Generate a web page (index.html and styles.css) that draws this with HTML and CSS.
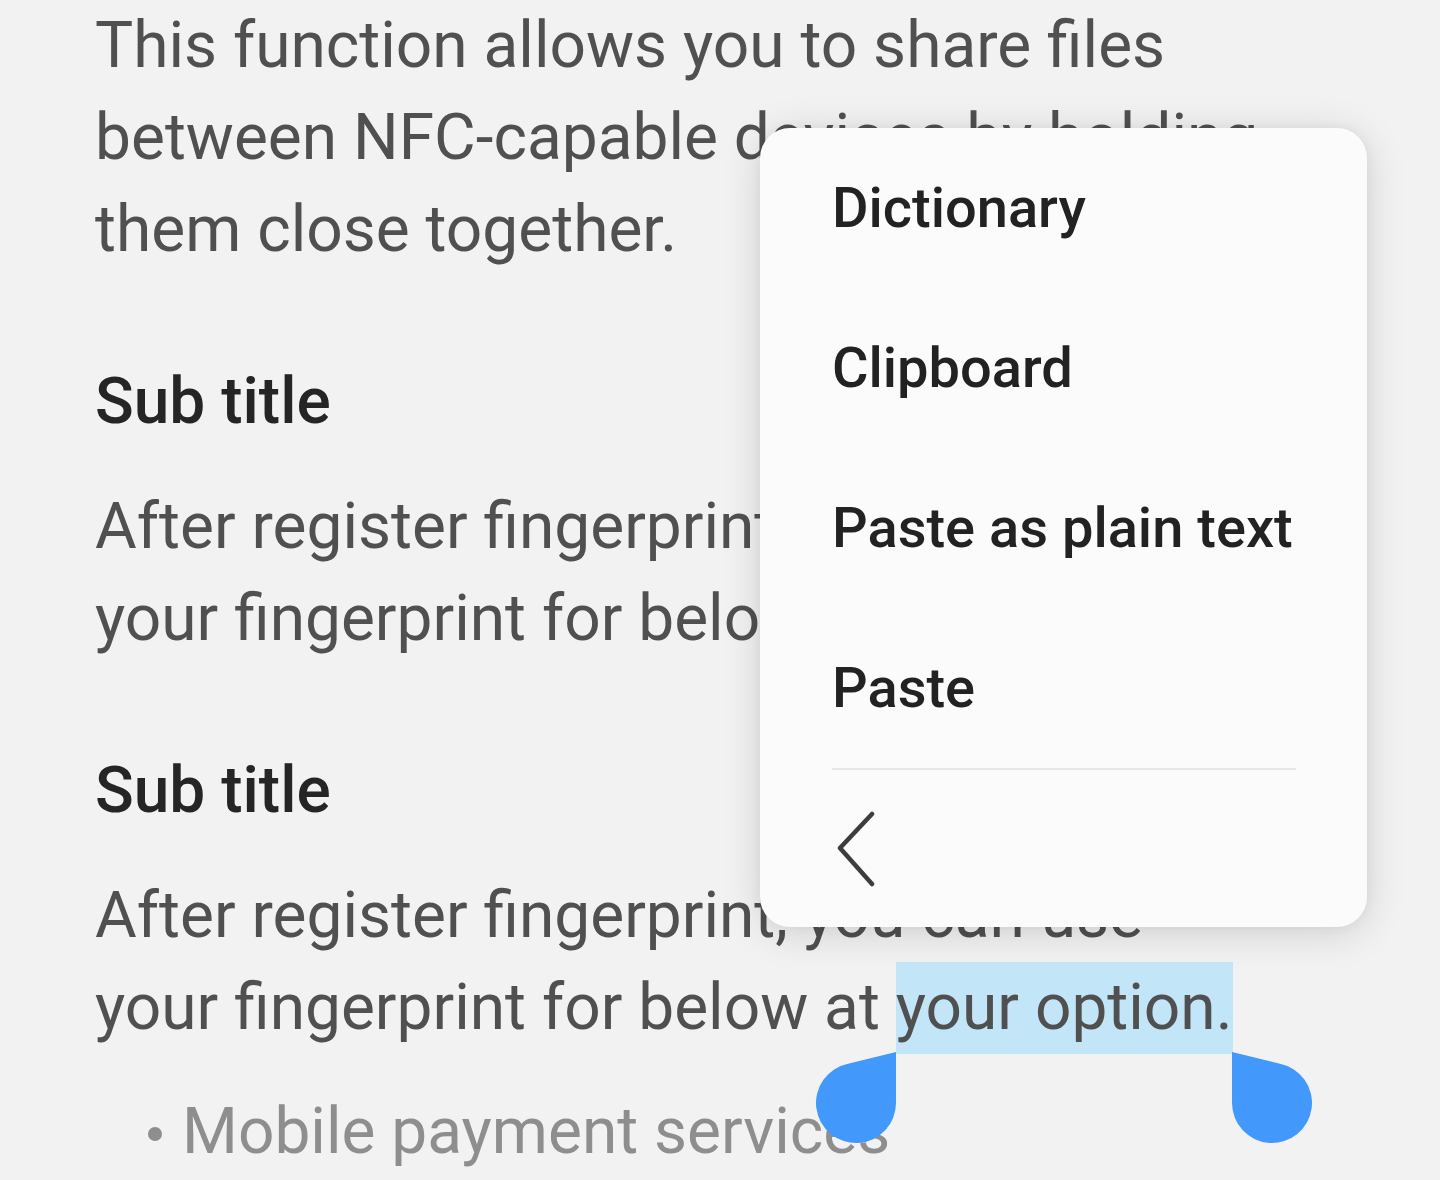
FILE: index.html
```html
<!DOCTYPE html>
<html>
<head>
<meta charset="utf-8">
<link rel="stylesheet" href="styles.css">
</head>
<body>
<div class="screen">
  <main class="content">
    <p class="para">This function allows you to share files<br>between NFC-capable devices by holding<br>them close together.</p>
    <h2 class="subtitle">Sub title</h2>
    <p class="para para-tight">After register fingerprint, you can use<br>your fingerprint for below at your option.</p>
    <h2 class="subtitle">Sub title</h2>
    <p class="para para-tight">After register fingerprint, you can use<br>your fingerprint for below at <span class="selected">your option.</span></p>
    <ul class="list">
      <li class="list-item"><span class="dot"></span><span>Mobile payment services</span></li>
    </ul>
  </main>

  <div class="menu">
    <div class="menu-item">Dictionary</div>
    <div class="menu-item">Clipboard</div>
    <div class="menu-item">Paste as plain text</div>
    <div class="menu-item">Paste</div>
    <div class="menu-divider"></div>
    <div class="menu-back">
      <svg class="chevron" width="40" height="76" viewBox="0 0 40 76">
        <path d="M36 3 L4 37 L36 73" fill="none" stroke="#3d3d3d" stroke-width="4.5" stroke-linecap="round" stroke-linejoin="round"/>
      </svg>
    </div>
  </div>

  <svg class="handle handle-left" width="80" height="92" viewBox="0 0 80 92">
    <path d="M80 0 L80 51 A40 40 0 1 1 32 11.8 Z" fill="#4298fb"/>
  </svg>
  <svg class="handle handle-right" width="80" height="92" viewBox="0 0 80 92">
    <path d="M0 0 L0 51 A40 40 0 1 0 48 11.8 Z" fill="#4298fb"/>
  </svg>
</div>
</body>
</html>
```

FILE: styles.css
```css
html, body {
  margin: 0;
  padding: 0;
  background: #f2f2f2;
}

.screen {
  position: relative;
  width: 1440px;
  height: 1180px;
  overflow: hidden;
  background: #f2f2f2;
  font-family: Roboto, "Noto Sans", sans-serif;
}

.content {
  padding-left: 95px;
}

.para {
  margin: 0 0 80px 0;
  font-size: 64px;
  line-height: 92px;
  color: #505050;
  font-weight: 400;
  white-space: nowrap;
}

.para-tight {
  margin-top: 33px;
}

.subtitle {
  margin: 0;
  font-size: 64px;
  line-height: 92px;
  font-weight: 500;
  color: #252525;
}

.selected {
  display: inline-block;
  line-height: 92px;
  background: #c2e5f8;
}

.list {
  list-style: none;
  margin: -48px 0 0 0;
  padding: 0;
}

.list-item {
  display: flex;
  align-items: center;
  gap: 20px;
  margin-left: 53px;
  font-size: 64px;
  line-height: 92px;
  color: #8e8e8e;
  white-space: nowrap;
}

.dot {
  width: 14px;
  height: 14px;
  border-radius: 50%;
  background: #8e8e8e;
  flex: none;
  margin-top: 4px;
}

.menu {
  position: absolute;
  left: 760px;
  top: 128px;
  width: 607px;
  height: 799px;
  background: #fbfbfb;
  border-radius: 30px;
  box-shadow: 0 6px 40px rgba(0, 0, 0, 0.14), 0 0 12px rgba(0, 0, 0, 0.05);
  display: flex;
  flex-direction: column;
}

.menu-item {
  height: 160px;
  line-height: 160px;
  padding-left: 72px;
  font-size: 56px;
  font-weight: 500;
  color: #222222;
  white-space: nowrap;
}

.menu-divider {
  height: 2px;
  margin: 0 71px 0 72px;
  background: #e6e6e6;
}

.menu-back {
  flex: 1;
  display: flex;
  align-items: center;
  padding-left: 76px;
}

.chevron {
  display: block;
}

.handle {
  position: absolute;
  top: 1052px;
}

.handle-left {
  left: 816px;
}

.handle-right {
  left: 1232px;
}
```
